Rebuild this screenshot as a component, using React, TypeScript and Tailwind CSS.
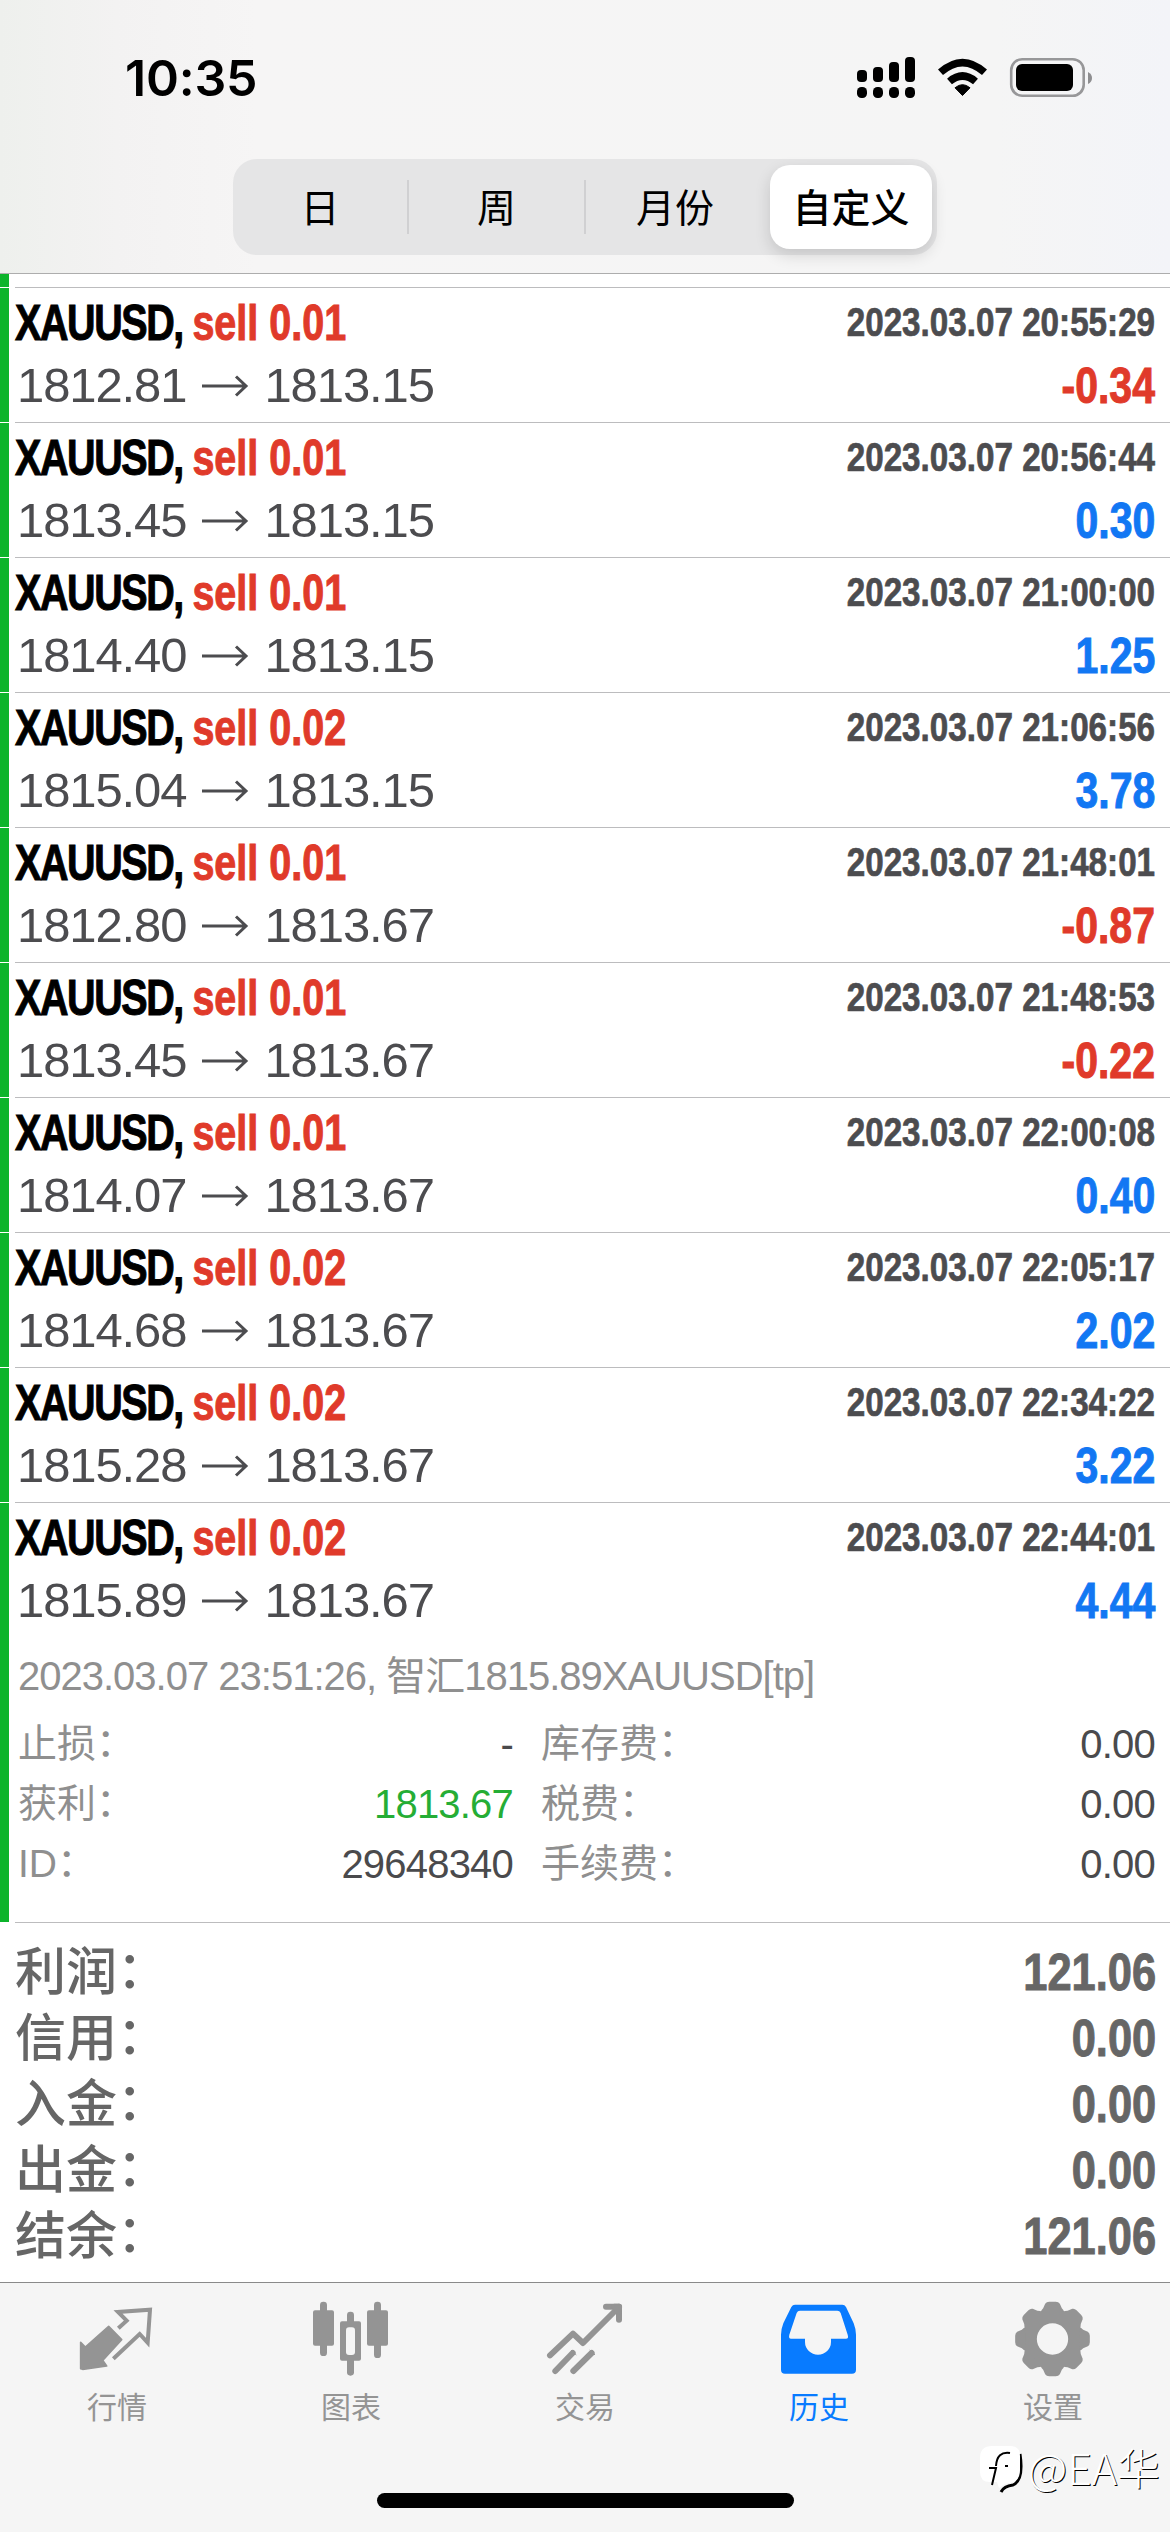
import clsx from 'clsx';
import React from 'react';

type Deal = {
  volume: string;
  open: string;
  close: string;
  time: string;
  profit: string;
};

const DEALS: Deal[] = [
  { volume: '0.01', open: '1812.81', close: '1813.15', time: '2023.03.07 20:55:29', profit: '-0.34' },
  { volume: '0.01', open: '1813.45', close: '1813.15', time: '2023.03.07 20:56:44', profit: '0.30' },
  { volume: '0.01', open: '1814.40', close: '1813.15', time: '2023.03.07 21:00:00', profit: '1.25' },
  { volume: '0.02', open: '1815.04', close: '1813.15', time: '2023.03.07 21:06:56', profit: '3.78' },
  { volume: '0.01', open: '1812.80', close: '1813.67', time: '2023.03.07 21:48:01', profit: '-0.87' },
  { volume: '0.01', open: '1813.45', close: '1813.67', time: '2023.03.07 21:48:53', profit: '-0.22' },
  { volume: '0.01', open: '1814.07', close: '1813.67', time: '2023.03.07 22:00:08', profit: '0.40' },
  { volume: '0.02', open: '1814.68', close: '1813.67', time: '2023.03.07 22:05:17', profit: '2.02' },
  { volume: '0.02', open: '1815.28', close: '1813.67', time: '2023.03.07 22:34:22', profit: '3.22' },
  { volume: '0.02', open: '1815.89', close: '1813.67', time: '2023.03.07 22:44:01', profit: '4.44' },
];

const DETAILS = [
  ['止损', '-', '库存费', '0.00'],
  ['获利', '1813.67', '税费', '0.00'],
  ['ID', '29648340', '手续费', '0.00'],
];

const SUMMARY = [
  ['利润', '121.06'],
  ['信用', '0.00'],
  ['入金', '0.00'],
  ['出金', '0.00'],
  ['结余', '121.06'],
];

// condensed heavy face
const CONDENSED = 'font-bold [-webkit-text-stroke:1px_currentColor]';

function StatusBar() {
  return (
    <div className="h-[159px] pl-[125px] pr-[78px] flex justify-between">
      <span className="mt-[46px] font-['Inter',sans-serif] font-semibold text-[50px] leading-[64px] tracking-[-0.2px]">
        10:35
      </span>
      <svg className="mt-[50px]" width="236" height="54" viewBox="-1 0 236 54">
        <rect x="0" y="20" width="10" height="12" rx="4" />
        <rect x="16" y="17" width="10" height="15" rx="4" />
        <rect x="32" y="12" width="10" height="20" rx="4" />
        <rect x="48" y="7" width="10" height="25" rx="4" />
        {[0, 16, 32, 48].map((x) => (
          <rect key={x} x={x} y="37" width="10" height="11" rx="4.5" />
        ))}
        <path d="M105.500 45.500L98 37.800Q105.500 31.500 113 37.800Z" strokeLinejoin="round" stroke="#000" />
        <path d="M92.500 31.500Q105.500 20.500 118.500 31.500" fill="none" stroke="#000" strokeWidth="7.500" />
        <path d="M83.500 22.300Q105.500 2.800 127.500 22.300" fill="none" stroke="#000" strokeWidth="7.500" />
        <rect x="154.200" y="9.200" width="72.500" height="36.500" rx="11" fill="none" stroke="#979799" strokeWidth="2.600" />
        <rect x="159" y="14" width="57" height="27" rx="6" />
        <path d="M231 22Q235 24 235 28T231 34Z" fill="#8e8e90" />
      </svg>
    </div>
  );
}

function PeriodTabs() {
  return (
    <div className="mx-auto w-[704px] h-24 rounded-[24px] bg-[#e5e5e6] flex items-center text-[39px] leading-[80px] font-['Noto_Sans_CJK_SC',sans-serif]">
      <span className="w-[174px] h-[84px] text-center">日</span>
      <span className="w-[2px] h-[54px] bg-[#d0d0d2]" />
      <span className="w-[175px] h-[84px] text-center">周</span>
      <span className="w-[2px] h-[54px] bg-[#d0d0d2]" />
      <span className="w-[178px] h-[84px] text-center">月份</span>
      <span className="ml-[6px] w-[162px] h-[84px] rounded-[20px] bg-white shadow-[0_6px_16px_rgba(0,0,0,0.14)] text-center font-medium">
        自定义
      </span>
    </div>
  );
}

function DealHead({ deal }: { deal: Deal }) {
  return (
    <div className="pt-[3px] pr-[15px] flex justify-between whitespace-nowrap leading-[63px]">
      <div className="w-[440px]">
        <div className={clsx(CONDENSED, 'pt-px h-[63px] w-fit text-[50px] origin-left scale-x-[0.79]')}>
          <span className="tracking-[-1.800px]">XAUUSD, </span>
          <span className="text-[#e03a2a]">sell {deal.volume}</span>
        </div>
        <div className="pl-[2px] h-[63px] flex items-center text-[49px] tracking-[-1.100px] text-[#4c4c4f]">
          {deal.open}
          <svg className="ml-[15px] mr-[15px]" width="48" height="24" viewBox="0 0 48 24">
            <path d="M1 12H45M35 2.500L45 12L35 21.500" fill="none" stroke="currentColor" strokeWidth="3" />
          </svg>
          {deal.close}
        </div>
      </div>
      <div className={clsx(CONDENSED, 'flex flex-col items-end')}>
        <div className="h-[63px] text-[40.5px] origin-right scale-x-[0.82] text-[#4c4c4f] [-webkit-text-stroke:0.7px_#4c4c4f]">
          {deal.time}
        </div>
        <div
          className={clsx(
            'pt-px h-[63px] text-[50px] origin-right scale-x-[0.82]',
            deal.profit.startsWith('-')
              ? 'text-[#e03a2a] [-webkit-text-stroke:1px_#e03a2a]'
              : 'text-[#1277f3] [-webkit-text-stroke:1px_#1277f3]',
          )}
        >
          {deal.profit}
        </div>
      </div>
    </div>
  );
}

function DealRow({ children, className }: { children?: React.ReactNode; className: string }) {
  return (
    <div className={clsx('flex', className)}>
      <div className="w-[9px] mb-px bg-[#0cb42b]" />
      <div className="ml-[6px] flex-1 border-b border-[#bcbcbe]">{children}</div>
    </div>
  );
}

function DetailLabel({ text }: { text: string }) {
  return (
    <span>
      {text}
      <span className="relative -top-px">：</span>
    </span>
  );
}

function DealDetails() {
  return (
    <div className="pl-[3px] pr-[15px] text-[39px] leading-[60px] text-[#8f8f8f] whitespace-nowrap font-['Liberation_Sans','Noto_Sans_CJK_SC',sans-serif]">
      <div className="mt-[14px] mb-2 h-[60px] text-[40px] tracking-[-1px]">
        2023.03.07 23:51:26, 智汇1815.89XAUUSD[tp]
      </div>
      {DETAILS.map(([label, value, label2, value2], i) => (
        <div key={label} className="h-[60px] flex">
          <DetailLabel text={label} />
          <span
            className={clsx(
              'ml-auto text-[40px] tracking-[-0.800px]',
              i === 1 ? 'text-[#25ad35]' : 'text-[#4a4a4c]',
            )}
          >
            {value}
          </span>
          <span className="ml-7 w-[614px] flex justify-between">
            <DetailLabel text={label2} />
            <span className="text-[40px] tracking-[-0.800px] text-[#4a4a4c]">{value2}</span>
          </span>
        </div>
      ))}
    </div>
  );
}

function Summary() {
  return (
    <div className="h-[359px] pt-[12px] pl-[15px] pr-[14px] text-[#666]">
      {SUMMARY.map(([label, value]) => (
        <div key={label} className="h-[66px] flex justify-between leading-[66px]">
          <span className="text-[51px] font-medium font-['Noto_Sans_CJK_SC',sans-serif]">
            {label}
            <span className="relative -top-[2px]">：</span>
          </span>
          <span className={clsx(CONDENSED, 'mt-[4px] text-[52px] origin-right scale-x-[0.835]')}>{value}</span>
        </div>
      ))}
    </div>
  );
}

function QuotesIcon() {
  return (
    <>
      <path
        d="M8 127L22 141L92 79L131 119L74 181L86 198L14 208L8 206Z"
        fill="currentColor"
        stroke="currentColor"
        strokeWidth="5"
        strokeLinejoin="round"
      />
      <path
        d="M121 85L146 62L120 36L216 29L209 128L185 102L106 176"
        fill="none"
        stroke="currentColor"
        strokeWidth="12"
      />
    </>
  );
}

function ChartIcon() {
  return (
    <g fill="currentColor">
      <rect x="24" y="5" width="21" height="163" rx="10" />
      <rect x="3" y="31" width="63" height="106" rx="6" />
      <rect x="105" y="35" width="21" height="192" rx="10" />
      <rect x="84" y="64" width="63" height="118" rx="6" />
      <rect x="102" y="82" width="27" height="83" rx="9" fill="#f5f5f5" />
      <rect x="186" y="5" width="21" height="169" rx="10" />
      <rect x="165" y="31" width="63" height="106" rx="6" />
    </g>
  );
}

function TradeIcon() {
  return (
    <g fill="none" stroke="currentColor" strokeWidth="18" strokeLinecap="round" strokeLinejoin="round">
      <path d="M12 166L81 101L111 129L219 21" />
      <path d="M180 20H219V59" />
      <path d="M205 20H219V34Z" />
      <path d="M28 213L80 159M82 213L137 159" />
      <path d="M76 151L90 164M132 151L146 164" strokeWidth="3" />
    </g>
  );
}

function HistoryIcon() {
  return (
    <path
      fillRule="evenodd"
      fill="currentColor"
      d="M45 14H187Q194 14 198 21L221 70Q228 88 228 104V209Q228 221 216 221H15Q3 221 3 209V104Q3 88 10 70L34 21Q38 14 45 14ZM60 32Q53 32 50 39L28 104Q25 116 33 116H75V126A39 38 0 0 0 153 126V116H198Q207 116 203 104L182 39Q179 32 172 32Z"
    />
  );
}

function SettingsIcon() {
  return (
    <g transform="translate(115.500 117)" fill="currentColor">
      <circle r="68" fill="none" stroke="currentColor" strokeWidth="42" />
      {[0, 45, 90, 135, 180, 225, 270, 315].map((angle) => (
        <path
          key={angle}
          transform={`rotate(${angle})`}
          d="M-36 -80Q-34 -86 -28 -92L-22 -106Q-18 -112 -10 -112H10Q18 -112 22 -106L28 -92Q34 -86 36 -80Z"
        />
      ))}
    </g>
  );
}

const TABS = [
  { name: '行情', icon: <QuotesIcon /> },
  { name: '图表', icon: <ChartIcon /> },
  { name: '交易', icon: <TradeIcon /> },
  { name: '历史', icon: <HistoryIcon />, active: true },
  { name: '设置', icon: <SettingsIcon /> },
];

function TabBar() {
  return (
    <div className="relative h-[250px] border-t border-[#8a8a8a] bg-[#f5f5f5]">
      <div className="flex pt-[17px]">
        {TABS.map(({ name, icon, active }) => (
          <div
            key={name}
            className={clsx('flex-1 flex flex-col items-center', active ? 'text-[#087bff]' : 'text-[#949494]')}
          >
            <svg width="78" height="78" viewBox="0 0 234 234">
              {icon}
            </svg>
            <span className="mt-[7px] text-[30px] leading-[40px] font-['Noto_Sans_CJK_SC',sans-serif]">{name}</span>
          </div>
        ))}
      </div>
      <div className="absolute left-[377px] top-[210px] w-[417px] h-[15px] rounded-full bg-black" />
      <div className="absolute left-[980px] top-[154px] flex items-center text-white">
        <svg className="mt-[5px]" width="44" height="52" viewBox="0 0 44 52">
          <path d="M40 12Q44 38 33 43Q24 44 21 50" fill="none" stroke="#000" strokeWidth="3" />
          <path
            d="M12 4H30Q40 4 40 14V28Q40 40 29 41Q23 42 19 46L17 40H10Q0 40 0 30V16Q0 4 12 4Z"
            fill="#fff"
          />
          <path d="M30 11Q17 9 16 24M9 26H16L12 43M25 24H28" fill="none" stroke="#000" strokeWidth="2" />
        </svg>
        <span className="ml-[4px] text-[43px] leading-[50px] font-light [text-shadow:1px_1px_0_#000] font-['Noto_Sans_CJK_SC',sans-serif]">
          @EA华
        </span>
      </div>
    </div>
  );
}

export default function App() {
  return (
    <div className="w-[1170px] h-[2532px] bg-white text-black overflow-hidden flex flex-col font-['Liberation_Sans','Noto_Sans_CJK_SC',sans-serif]">
      <div className="h-[274px] border-b border-[#adadad] bg-[linear-gradient(to_right,#eef0ed,#f3f2f2_10%,#f6f5f5_22%,#f5f5f5_85%,#f3f4f8)]">
        <StatusBar />
        <PeriodTabs />
      </div>
      <DealRow className="h-[14px]" />
      {DEALS.map((deal, i) => {
        const expanded = i === DEALS.length - 1;
        return (
          <DealRow key={deal.time} className={expanded ? 'h-[420px]' : 'h-[135px]'}>
            <DealHead deal={deal} />
            {expanded && <DealDetails />}
          </DealRow>
        );
      })}
      <Summary />
      <TabBar />
    </div>
  );
}
